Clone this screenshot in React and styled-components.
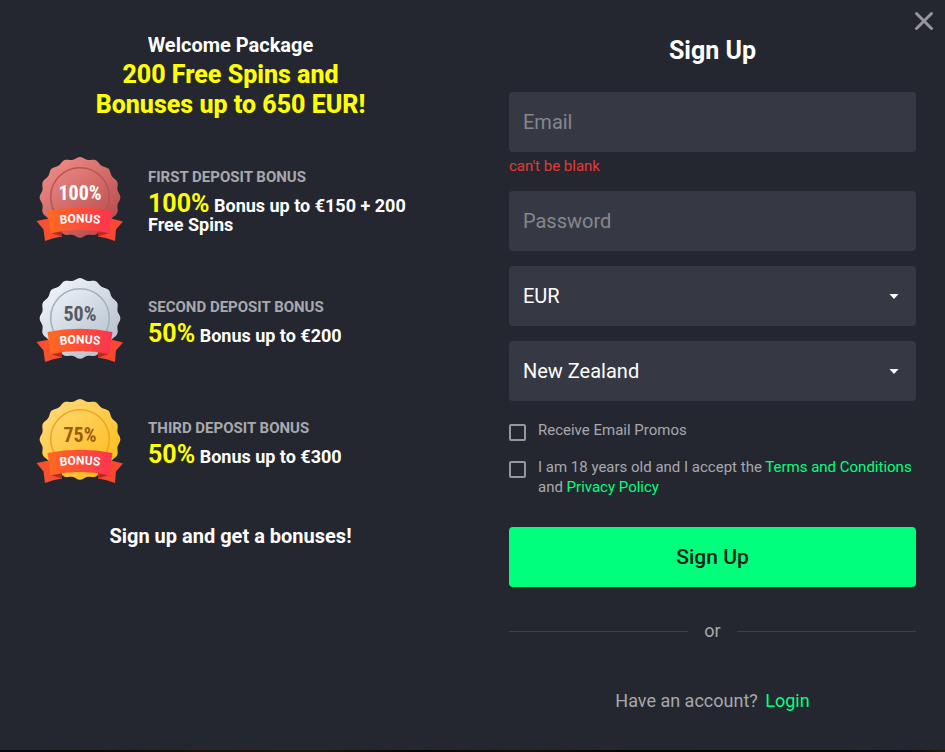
import React, { useState } from 'react'
import styled, { createGlobalStyle } from 'styled-components'

const bonuses = [
    { id: 'first', title: 'First deposit bonus', percent: '100%', text: 'Bonus up to €150 + 200 Free Spins', badge: '100%', from: '#ec8a84', to: '#b5484a', ring: '#bd5254', ink: '#ffffff' },
    { id: 'second', title: 'Second deposit bonus', percent: '50%', text: 'Bonus up to €200', badge: '50%', from: '#eef3f8', to: '#b2becb', ring: '#a3b1bf', ink: '#56595f' },
    { id: 'third', title: 'Third deposit bonus', percent: '50%', text: 'Bonus up to €300', badge: '75%', from: '#ffd873', to: '#fdbb16', ring: '#eea526', ink: '#9c5c0c' },
]

// wavy edge of the medal, 16 waves starting with a crest at the top
const sealPath = () => {
    const points = []
    for (let deg = 0; deg < 360; deg += 3) {
        const a = (deg * Math.PI) / 180
        const r = 39.3 + 1.1 * Math.cos(a * 16)
        points.push(`${(44 + r * Math.sin(a)).toFixed(2)} ${(40.4 - r * Math.cos(a)).toFixed(2)}`)
    }
    return `M${points.join('L')}Z`
}

function Badge({ id, badge, from, to, ring, ink }) {
    return (
        <Medal viewBox="0 0 88 86" aria-hidden="true">
            <defs>
                <linearGradient id={`${id}-seal`} x1="0.15" y1="0.1" x2="0.85" y2="0.95">
                    <stop offset="0" stopColor={from} />
                    <stop offset="1" stopColor={to} />
                </linearGradient>
                <linearGradient id={`${id}-band`} x1="0" y1="0" x2="1" y2="0">
                    <stop offset="0" stopColor="#ff6a1f" />
                    <stop offset="1" stopColor="#fb3350" />
                </linearGradient>
                <path id={`${id}-arc`} d="M14 69Q44 62 74 69" />
            </defs>
            <path d={sealPath()} fill={`url(#${id}-seal)`} />
            <circle cx="44" cy="40" r="29.3" fill="none" stroke={ring} strokeWidth="1.6" />
            <path d="M0.5 64L13 61.5L26 73V79.5Q17 80.5 9 84L7.5 72.5Z" fill="#f9502f" />
            <path d="M87 64.5L75 61.5L62 73V79.5Q71 80.5 79 84L80 72.5Z" fill="#f9482f" />
            <path d="M14.7 76L26 73V79.5Z" fill="#b92a1f" />
            <path d="M73.3 76L62 73V79.5Z" fill="#b92a1f" />
            <path d="M11.5 54Q44 47.5 76.5 54L73.3 76.3Q44 69.5 14.7 76.3Z" fill={`url(#${id}-band)`} />
            <MedalText x="44" y="43" $ink={ink}>{badge}</MedalText>
            <BandText>
                <textPath href={`#${id}-arc`} startOffset="50%">BONUS</textPath>
            </BandText>
        </Medal>
    )
}

function App() {
    const [email, setEmail] = useState('')
    const [password, setPassword] = useState('')

    return (
        <>
            <GlobalStyle />
            <Modal>
                <Close type="button" aria-label="Close">
                    <svg viewBox="0 0 20 20" width="20" height="20">
                        <path d="M2.5 2.5L17.5 17.5M17.5 2.5L2.5 17.5" stroke="#96979b" strokeWidth="3" strokeLinecap="round" />
                    </svg>
                </Close>
                <Promo>
                    <Welcome>
                        <p>Welcome Package</p>
                        <h2>200 Free Spins and Bonuses up to 650 EUR!</h2>
                    </Welcome>
                    <BonusList>
                        {bonuses.map((bonus) => (
                            <BonusItem key={bonus.id}>
                                <Badge {...bonus} />
                                <div>
                                    <BonusTitle>{bonus.title}</BonusTitle>
                                    <BonusText><span>{bonus.percent}</span> {bonus.text}</BonusText>
                                </div>
                            </BonusItem>
                        ))}
                    </BonusList>
                    <PromoFooter>Sign up and get a bonuses!</PromoFooter>
                </Promo>
                <Form onSubmit={(e) => e.preventDefault()} noValidate>
                    <h1>Sign Up</h1>
                    <Field>
                        <Input type="email" placeholder="Email" aria-label="Email" aria-describedby="email-error" value={email} onChange={(e) => setEmail(e.target.value)} />
                        <FieldError id="email-error">can't be blank</FieldError>
                    </Field>
                    <Field>
                        <Input type="password" placeholder="Password" aria-label="Password" value={password} onChange={(e) => setPassword(e.target.value)} />
                    </Field>
                    <Field>
                        <Select aria-label="Currency" defaultValue="EUR">
                            <option>EUR</option>
                            <option>NZD</option>
                            <option>USD</option>
                        </Select>
                        <Caret viewBox="0 0 10 5"><path d="M0.5 0H9.5L5 5Z" fill="#fff" /></Caret>
                    </Field>
                    <Field>
                        <Select aria-label="Country" defaultValue="New Zealand">
                            <option>New Zealand</option>
                            <option>Germany</option>
                            <option>Canada</option>
                        </Select>
                        <Caret viewBox="0 0 10 5"><path d="M0.5 0H9.5L5 5Z" fill="#fff" /></Caret>
                    </Field>
                    <Checks>
                        <Check>
                            <input type="checkbox" id="promos" />
                            <label htmlFor="promos">Receive Email Promos</label>
                        </Check>
                        <Check>
                            <input type="checkbox" id="terms" />
                            <label htmlFor="terms">
                                I am 18 years old and I accept the <Link href="#terms">Terms and Conditions</Link> and <Link href="#privacy">Privacy Policy</Link>
                            </label>
                        </Check>
                    </Checks>
                    <Submit type="submit">Sign Up</Submit>
                    <Divider>or</Divider>
                    <Account>Have an account? <Link href="#login">Login</Link></Account>
                </Form>
            </Modal>
        </>
    )
}

export default App

const GlobalStyle = createGlobalStyle`
    * {
        box-sizing: border-box;
    }
    body {
        margin: 0;
        background: linear-gradient(90deg, #020a12 0%, #0b0706 10%, #1c0e06 20%, #1f1206 34%, #060508 44%, #140e06 56%, #050404 66%, #050505 90%, #0a0718 96%, #2a1c08 100%);
        color: #fff;
        font-family: Roboto, "Liberation Sans", sans-serif;
    }
    h1, h2, h3, p, ul {
        margin: 0;
        padding: 0;
    }
`
const Modal = styled.main`
    position: relative;
    display: grid;
    grid-template-columns: 20fr 21fr;
    background: #252730;
    @media (max-width: 700px) {
        grid-template-columns: 1fr;
    }
`
const Close = styled.button`
    position: absolute;
    top: 11px;
    right: 11px;
    width: 20px;
    height: 20px;
    padding: 0;
    border: 0;
    background: none;
    cursor: pointer;
    svg {
        display: block;
    }
`
const Promo = styled.section`
    padding: 30px 36px;
`
const Welcome = styled.div`
    max-width: 300px;
    margin: 0 auto;
    text-align: center;
    line-height: 30px;
    p {
        font-size: 20px;
        font-weight: 700;
    }
    h2 {
        color: #ff0;
        font-size: 25px;
        font-weight: 800;
    }
`
const BonusList = styled.ul`
    display: grid;
    gap: 35px;
    margin-top: 37px;
    list-style: none;
`
const BonusItem = styled.li`
    display: flex;
    align-items: center;
    gap: 24px;
`
const Medal = styled.svg`
    flex: none;
    width: 88px;
    height: 86px;
`
const MedalText = styled.text`
    fill: ${({ $ink }) => $ink};
    font-family: "Roboto Condensed", "Liberation Sans Narrow", Roboto, sans-serif;
    font-size: 20px;
    font-weight: 700;
    text-anchor: middle;
`
const BandText = styled.text`
    fill: #fff;
    font-size: 12px;
    font-weight: 700;
    text-anchor: middle;
`
const BonusTitle = styled.h3`
    color: #a8a9ad;
    font-size: 15px;
    font-weight: 700;
    line-height: 20px;
    text-transform: uppercase;
`
const BonusText = styled.p`
    font-size: 18px;
    font-weight: 700;
    line-height: 19px;
    padding-top: 7px;
    span {
        color: #ff0;
        font-size: 25px;
    }
`
const PromoFooter = styled.p`
    margin-top: 36px;
    font-size: 20px;
    font-weight: 700;
    line-height: 30px;
    text-align: center;
`
const Form = styled.form`
    padding: 36px 29px 39px 48px;
    h1 {
        margin-bottom: 26px;
        font-size: 25px;
        font-weight: 700;
        line-height: 30px;
        text-align: center;
    }
`
const Field = styled.div`
    position: relative;
    margin-bottom: 15px;
`
const Input = styled.input`
    display: block;
    width: 100%;
    height: 60px;
    padding: 0 14px;
    border: 0;
    border-radius: 4px;
    background: #363944;
    color: #fff;
    font: 400 20px Roboto, "Liberation Sans", sans-serif;
    &::placeholder {
        color: #86878c;
        opacity: 1;
    }
`
const Select = styled(Input).attrs({ as: 'select' })`
    appearance: none;
    padding-right: 40px;
    cursor: pointer;
`
const Caret = styled.svg`
    position: absolute;
    top: 28px;
    right: 17px;
    width: 10px;
    height: 5px;
    pointer-events: none;
`
const FieldError = styled.p`
    padding-top: 5px;
    color: #e53935;
    font-size: 15px;
    line-height: 19px;
`
const Checks = styled.div`
    display: grid;
    gap: 16px;
    margin: 19px 0 30px;
`
const Check = styled.div`
    display: flex;
    align-items: flex-start;
    gap: 12px;
    input {
        appearance: none;
        flex: none;
        width: 17px;
        height: 17px;
        margin: 4px 0 0;
        border: 2px solid #96979b;
        border-radius: 2px;
        cursor: pointer;
        &:checked {
            background: #00ff7b;
        }
    }
    label {
        color: #a8a9ad;
        font-size: 15px;
        line-height: 20px;
    }
`
const Link = styled.a`
    color: #00ff7b;
    text-decoration: none;
`
const Submit = styled.button`
    display: block;
    width: 100%;
    height: 60px;
    border: 0;
    border-radius: 4px;
    background: #00ff7b;
    color: #10231b;
    font: 500 21px Roboto, "Liberation Sans", sans-serif;
    cursor: pointer;
`
const Divider = styled.div`
    display: flex;
    align-items: center;
    gap: 16px;
    margin-top: 34px;
    color: #a8a9ad;
    font-size: 18px;
    line-height: 20px;
    &::before,
    &::after {
        content: "";
        flex: 1;
        height: 1px;
        background: #3e4049;
    }
`
const Account = styled.p`
    margin-top: 50px;
    color: #a8a9ad;
    font-size: 18px;
    line-height: 20px;
    text-align: center;
    a {
        margin-left: 3px;
    }
`
